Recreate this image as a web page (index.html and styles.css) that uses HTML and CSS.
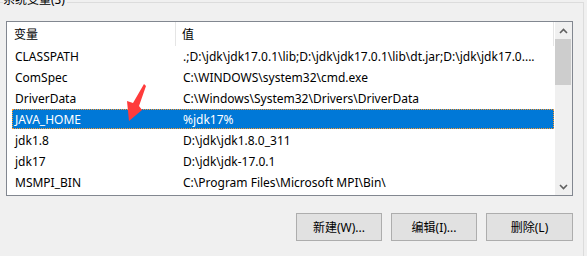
FILE: index.html
```html
<!DOCTYPE html>
<html lang="zh-CN">
<head>
  <meta charset="UTF-8">
  <title>系统变量</title>
  <link rel="stylesheet" href="styles.css">
</head>
<body>
  <div class="group">
    <span class="legend">系统变量(S)</span>
    <div class="list">
      <div class="table">
        <div class="header">
          <div class="head-cell first">变量</div>
          <div class="head-cell second">值</div>
        </div>
        <div class="row"><span class="name">CLASSPATH</span><span class="value">.;D:\jdk\jdk17.0.1\lib;D:\jdk\jdk17.0.1\lib\dt.jar;D:\jdk\jdk17.0....</span></div>
        <div class="row"><span class="name">ComSpec</span><span class="value">C:\WINDOWS\system32\cmd.exe</span></div>
        <div class="row"><span class="name">DriverData</span><span class="value">C:\Windows\System32\Drivers\DriverData</span></div>
        <div class="row selected"><span class="name">JAVA_HOME</span><span class="value">%jdk17%</span></div>
        <div class="row"><span class="name">jdk1.8</span><span class="value">D:\jdk\jdk1.8.0_311</span></div>
        <div class="row"><span class="name">jdk17</span><span class="value">D:\jdk\jdk-17.0.1</span></div>
        <div class="row"><span class="name">MSMPI_BIN</span><span class="value">C:\Program Files\Microsoft MPI\Bin\</span></div>
      </div>
      <div class="scrollbar">
        <div class="arrow">
          <svg width="9" height="6" viewBox="0 0 9 6"><path d="M1 5 L4.5 1.5 L8 5" fill="none" stroke="#606060" stroke-width="1.6"/></svg>
        </div>
        <div class="track"><div class="thumb"></div></div>
        <div class="arrow">
          <svg width="9" height="6" viewBox="0 0 9 6"><path d="M1 1 L4.5 4.5 L8 1" fill="none" stroke="#606060" stroke-width="1.6"/></svg>
        </div>
      </div>
    </div>
    <div class="buttons">
      <button class="btn">新建(W)...</button>
      <button class="btn">编辑(I)...</button>
      <button class="btn wide">删除(L)</button>
    </div>
  </div>

  <svg class="pointer" width="587" height="256" viewBox="0 0 587 256">
    <path d="M144 84 L146 86 L139 106 L142 110 L129 121 L127 101 L133 103 Z" fill="#ff3b3b"/>
  </svg>
</body>
</html>
```

FILE: styles.css
```css
* {
  box-sizing: border-box;
}

body {
  position: relative;
  margin: 0;
  height: 256px;
  overflow: hidden;
  background: #f0f0f0;
  font-family: "Noto Sans", "Noto Sans CJK SC", sans-serif;
  font-size: 12px;
  color: #000;
}

.group {
  position: relative;
  width: 584px;
  height: 254px;
  margin-top: 2px;
  padding: 18px 0 0 6px;
  border-top: 1px solid #dcdcdc;
  border-right: 1px solid #dcdcdc;
}

.legend {
  position: absolute;
  top: -11px;
  left: 3px;
  padding-right: 2px;
  background: #f0f0f0;
  color: #000;
  line-height: 16px;
}

.list {
  display: flex;
  width: 567px;
  height: 175px;
  border: 1px solid #828790;
  background: #fff;
}

.table {
  flex: 1;
  overflow: hidden;
}

.header {
  display: flex;
  height: 24px;
}

.head-cell {
  display: flex;
  align-items: center;
  border-right: 1px solid #e5e5e5;
}

.head-cell.first {
  width: 169px;
  padding-left: 7px;
}

.head-cell.second {
  width: 378px;
  padding-left: 6px;
}

.row {
  display: flex;
  align-items: center;
  height: 21px;
  margin: 0 1px 0 5px;
  padding-left: 2px;
  white-space: nowrap;
  border: 1px solid transparent;
}

.row .name {
  width: 168px;
  flex-shrink: 0;
}

.row .value {
  overflow: hidden;
  text-overflow: ellipsis;
}

.row.selected {
  height: 20px;
  margin-bottom: 1px;
  background: #0078d7;
  color: #fff;
  border: 1px dotted #ff9a2e;
}

.scrollbar {
  display: flex;
  flex-direction: column;
  width: 17px;
  background: #f0f0f0;
}

.arrow {
  display: flex;
  align-items: center;
  justify-content: center;
  height: 17px;
}

.track {
  flex: 1;
}

.thumb {
  height: 46px;
  margin-right: 1px;
  background: #cdcdcd;
}

.buttons {
  display: flex;
  justify-content: flex-end;
  gap: 9px;
  width: 567px;
  margin-top: 17px;
}

.btn {
  width: 86px;
  height: 28px;
  padding: 0;
  border: 1px solid #adadad;
  background: #e1e1e1;
  font-family: "Noto Sans", "Noto Sans CJK SC", sans-serif;
  font-size: 12px;
  color: #000;
}

.btn.wide {
  width: 87px;
}

.pointer {
  position: absolute;
  top: 0;
  left: 0;
  pointer-events: none;
}
```
